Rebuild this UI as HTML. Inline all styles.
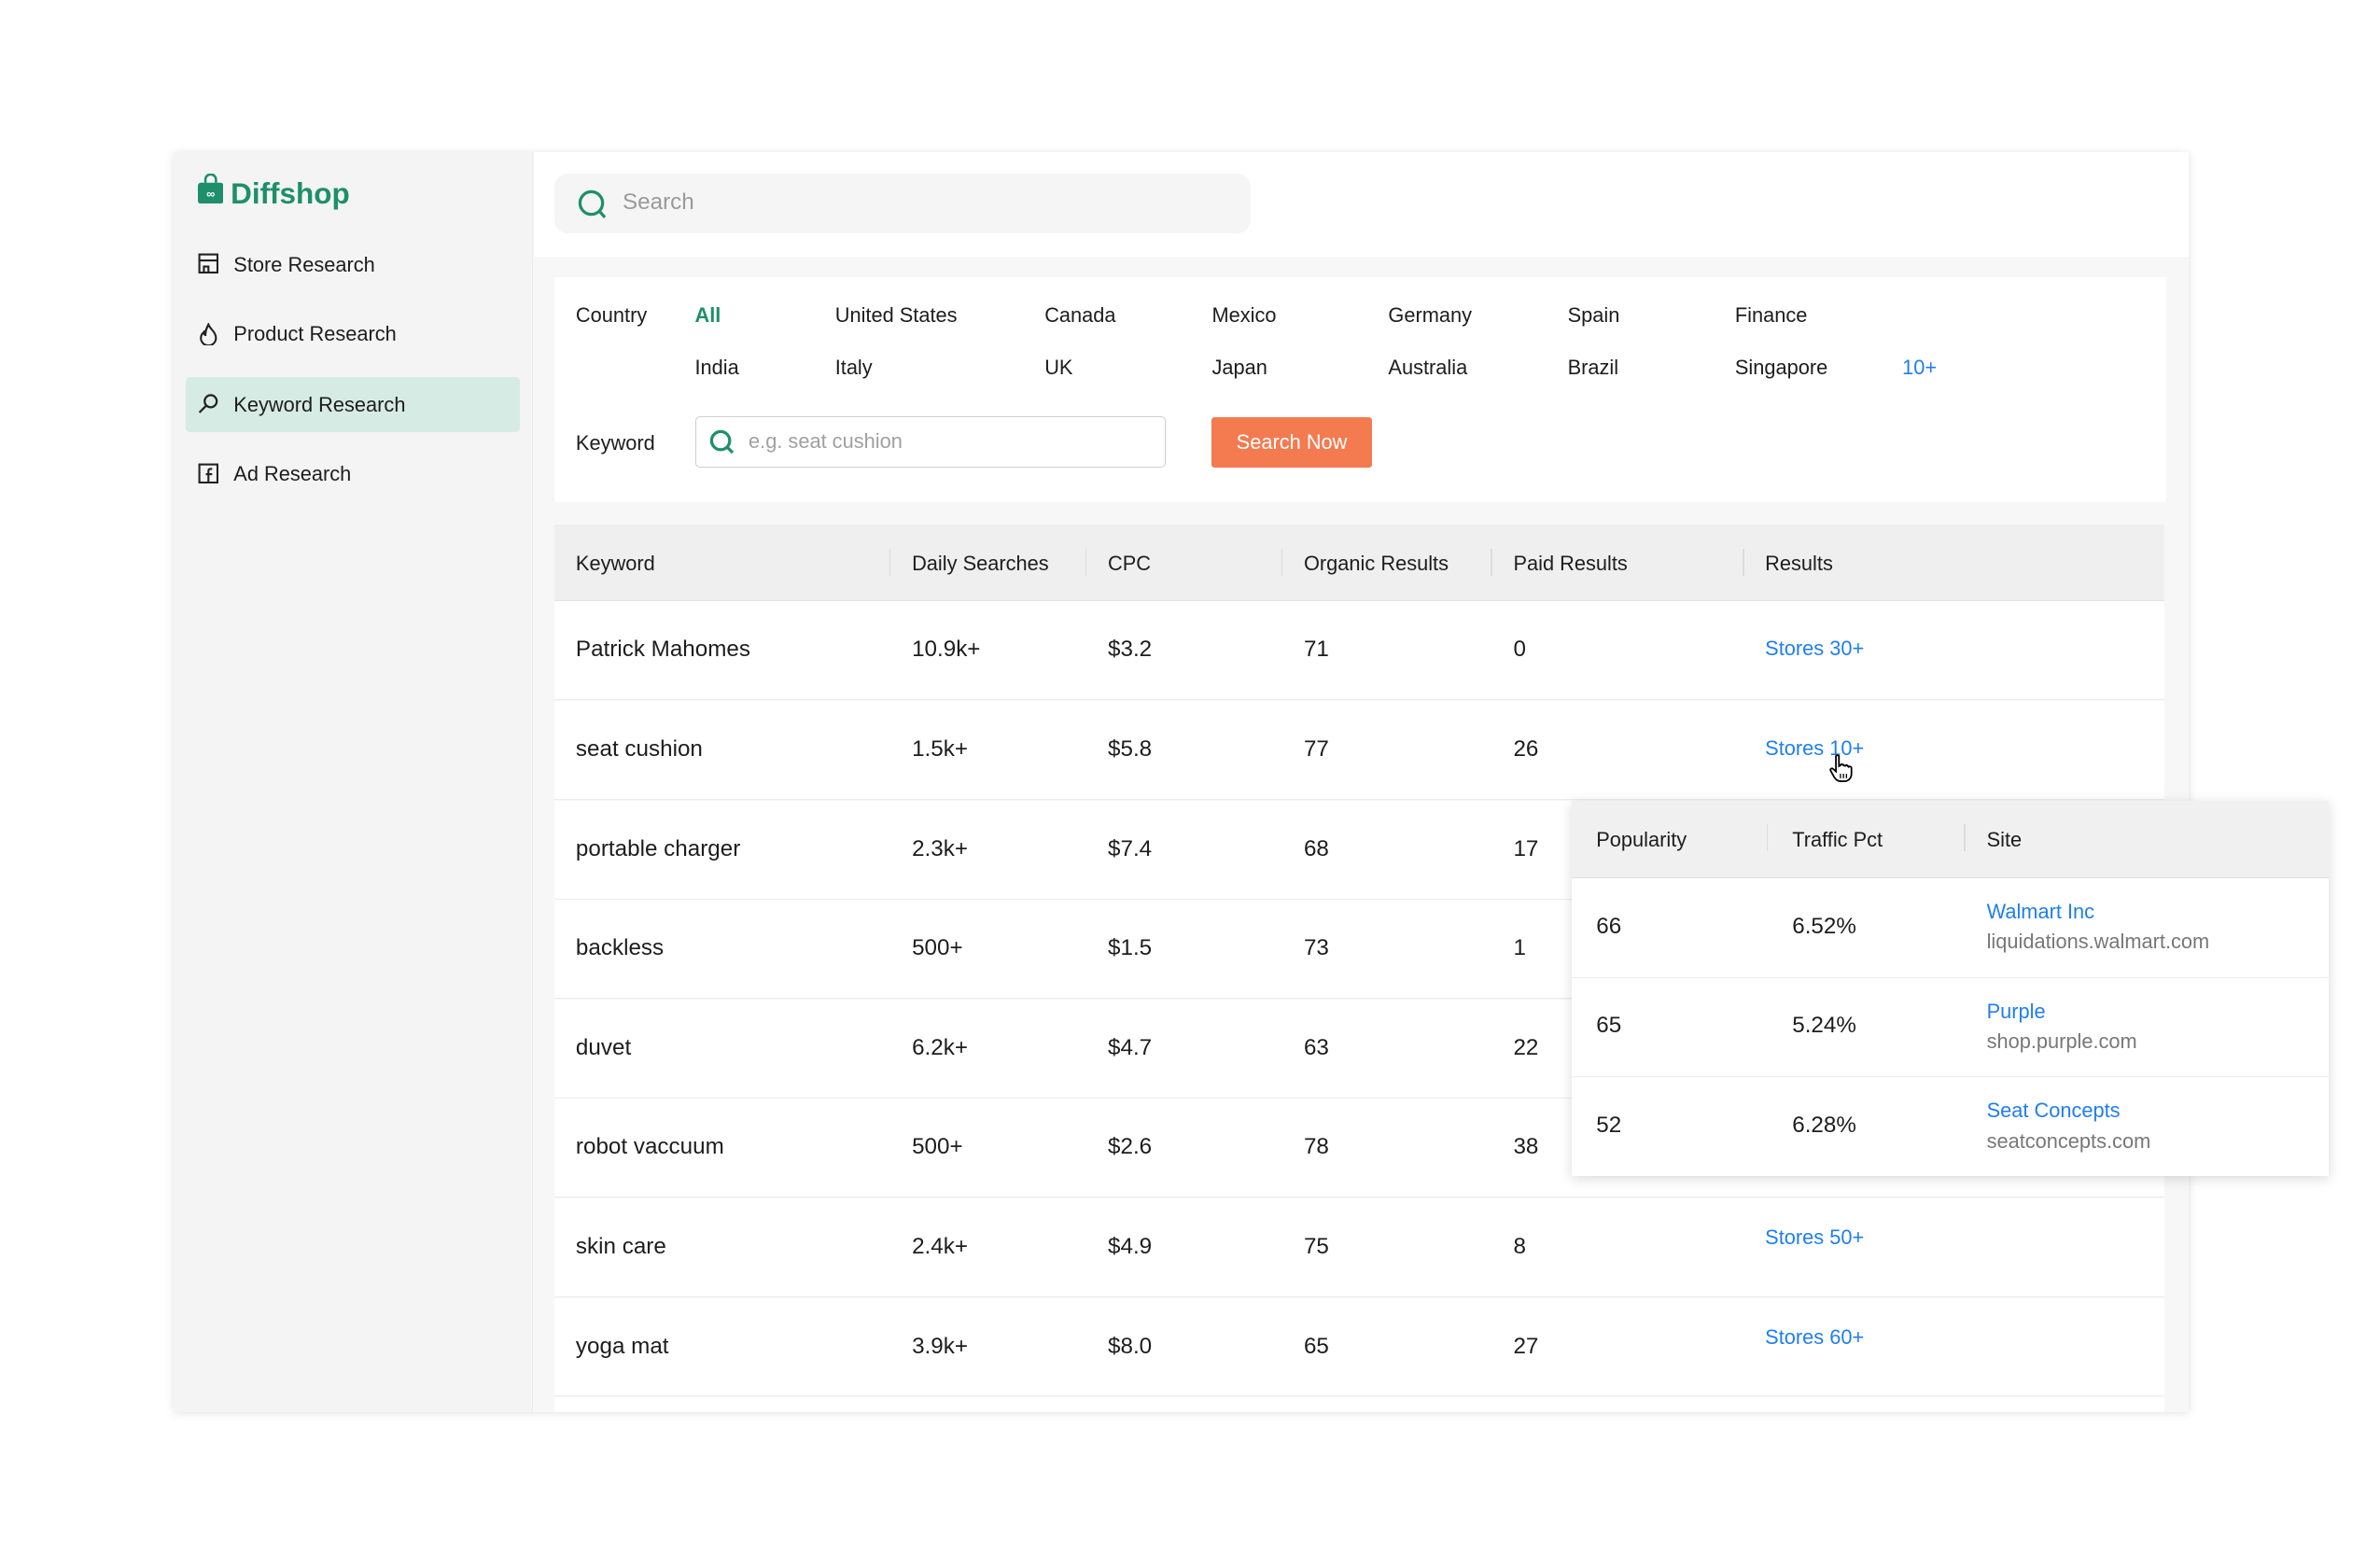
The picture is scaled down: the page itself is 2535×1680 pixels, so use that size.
<!DOCTYPE html>
<html><head><meta charset="utf-8"><style>
html,body{margin:0;padding:0;background:#fff;overflow:hidden;width:2535px;height:1680px}
#z{zoom:1.615;position:relative;width:1570px;height:1040px;font-family:"Liberation Sans",sans-serif;color:#1d1d1d}
.a{position:absolute;white-space:nowrap}
.card{position:absolute;left:115px;top:101px;width:1337px;height:836px;background:#f7f7f7;box-shadow:0 1px 6px rgba(0,0,0,.12);overflow:hidden}
.side{position:absolute;left:0;top:0;width:238px;height:836px;background:#f4f4f4;border-right:1px solid #ececec}
.nav{position:absolute;left:8px;width:222px;height:37px;font-size:13.5px;line-height:37px}
.nav span{position:absolute;left:32px}
.nav svg{position:absolute;left:8px;top:11px}
.hdr{position:absolute;left:239px;top:0;right:0;height:69px;background:#fff}
.t{font-size:13.5px}
.row{position:absolute;left:253px;width:1068px;height:65px;background:#fff;border-bottom:1px solid #ebebeb}
.row div{position:absolute;top:0;line-height:65px;font-size:15px}
.blue{color:#1f7ef0}
.sep{position:absolute;top:16px;width:1px;height:18px;background:#dcdcdc}
</style></head><body><div id="z">
<div class="card">
 <div class="side">
  <svg class="a" style="left:16px;top:14px" width="17" height="20" viewBox="0 0 17 20"><path d="M5 6V4a3.5 3.5 0 0 1 7 0v2" fill="none" stroke="#1e8f6a" stroke-width="1.6"/><rect x="0" y="6" width="17" height="14" rx="2" fill="#1e8f6a"/><text x="8.5" y="16" font-size="8" fill="#fff" text-anchor="middle" font-family="Liberation Sans" font-weight="bold">∞</text></svg>
  <div class="a" style="left:38px;top:16px;font-size:19.5px;font-weight:bold;color:#1e8f6a">Diffshop</div>
  <div class="nav" style="top:56px"><svg width="14" height="14" viewBox="0 0 14 14" fill="none" stroke="#222" stroke-width="1.3"><rect x="1" y="1" width="12" height="12"/><path d="M1 5h12M4 13V9h3v4"/></svg><span>Store Research</span></div>
  <div class="nav" style="top:102px"><svg width="14" height="15" viewBox="0 0 14 15" fill="none" stroke="#222" stroke-width="1.3"><path d="M7 1c1 3 5 5 5 9a5 5 0 0 1-10 0c0-2 1-3 2-4 0 2 1 2 1 2 0-3 1-5 2-7z"/></svg><span>Product Research</span></div>
  <div class="nav" style="top:149px;background:#d6ebe4;border-radius:3px"><svg width="14" height="14" viewBox="0 0 14 14" fill="none" stroke="#222" stroke-width="1.4"><circle cx="8.5" cy="5.5" r="4"/><path d="M5.5 8.5L1 13"/></svg><span>Keyword Research</span></div>
  <div class="nav" style="top:195px"><svg width="14" height="14" viewBox="0 0 14 14" fill="none" stroke="#222" stroke-width="1.3"><rect x="1" y="1" width="12" height="12"/><path d="M9.5 4H8.3C7.5 4 7 4.5 7 5.3V13M5.3 7.5H9.5" /></svg><span>Ad Research</span></div>
 </div>
 <div class="hdr">
  <div class="a" style="left:14px;top:14px;width:462px;height:40px;background:#f5f5f5;border-radius:9px">
   <svg class="a" style="left:15px;top:11px" width="20" height="20" viewBox="0 0 20 20" fill="none" stroke="#1e8f6a" stroke-width="2"><circle cx="9" cy="9" r="7.5"/><path d="M14.5 14.5L18 18.5"/></svg>
   <div class="a" style="left:45px;top:11px;font-size:15px;color:#9a9a9a">Search</div>
  </div>
 </div>
 <div class="a" style="left:253px;top:83px;width:1069px;height:149px;background:#fff"></div>
 <div class="a t" style="left:267px;top:100px">Country</div>
 <div class="a t" style="left:346px;top:100px;color:#1e8f6a;font-weight:bold">All</div>
 <div class="a t" style="left:439px;top:100px">United States</div>
 <div class="a t" style="left:578px;top:100px">Canada</div>
 <div class="a t" style="left:689px;top:100px">Mexico</div>
 <div class="a t" style="left:806px;top:100px">Germany</div>
 <div class="a t" style="left:925px;top:100px">Spain</div>
 <div class="a t" style="left:1036px;top:100px">Finance</div>
 <div class="a t" style="left:346px;top:135px">India</div>
 <div class="a t" style="left:439px;top:135px">Italy</div>
 <div class="a t" style="left:578px;top:135px">UK</div>
 <div class="a t" style="left:689px;top:135px">Japan</div>
 <div class="a t" style="left:806px;top:135px">Australia</div>
 <div class="a t" style="left:925px;top:135px">Brazil</div>
 <div class="a t" style="left:1036px;top:135px">Singapore</div>
 <div class="a t blue" style="left:1147px;top:135px">10+</div>
 <div class="a t" style="left:267px;top:185px">Keyword</div>
 <div class="a" style="left:346px;top:175px;width:311px;height:33px;border:1px solid #cfcfcf;border-radius:3px;background:#fff">
  <svg class="a" style="left:9px;top:8px" width="17" height="17" viewBox="0 0 17 17" fill="none" stroke="#1e8f6a" stroke-width="2"><circle cx="7.5" cy="7.5" r="6"/><path d="M12 12l3.5 3.5"/></svg>
  <div class="a" style="left:35px;top:8px;font-size:13.5px;color:#a0a0a0">e.g. seat cushion</div>
 </div>
 <div class="a" style="left:689px;top:176px;width:106px;height:33px;background:#f47a50;border-radius:2px;color:#fff;font-size:13.5px;line-height:33px;text-align:center">Search Now</div>
 <div class="a" style="left:253px;top:247px;width:1068px;height:50px;background:#efefef;border-bottom:1px solid #e2e2e2">
  <div class="a t" style="left:14px;top:18px">Keyword</div><div class="sep" style="left:222px"></div>
  <div class="a t" style="left:237px;top:18px">Daily Searches</div><div class="sep" style="left:352px"></div>
  <div class="a t" style="left:367px;top:18px">CPC</div><div class="sep" style="left:482px"></div>
  <div class="a t" style="left:497px;top:18px">Organic Results</div><div class="sep" style="left:621px"></div>
  <div class="a t" style="left:636px;top:18px">Paid Results</div><div class="sep" style="left:788px"></div>
  <div class="a t" style="left:803px;top:18px">Results</div>
 </div>
 <div class="row" style="top:298px"><div style="left:14px">Patrick Mahomes</div><div style="left:237px">10.9k+</div><div style="left:367px">$3.2</div><div style="left:497px">71</div><div style="left:636px">0</div><div class="blue" style="left:803px;font-size:13.5px;line-height:63px">Stores 30+</div></div>
 <div class="row" style="top:364px"><div style="left:14px">seat cushion</div><div style="left:237px">1.5k+</div><div style="left:367px">$5.8</div><div style="left:497px">77</div><div style="left:636px">26</div><div class="blue" style="left:803px;font-size:13.5px;line-height:63px">Stores 10+</div></div>
 <div class="row" style="top:430px"><div style="left:14px">portable charger</div><div style="left:237px">2.3k+</div><div style="left:367px">$7.4</div><div style="left:497px">68</div><div style="left:636px">17</div></div>
 <div class="row" style="top:496px"><div style="left:14px">backless</div><div style="left:237px">500+</div><div style="left:367px">$1.5</div><div style="left:497px">73</div><div style="left:636px">1</div></div>
 <div class="row" style="top:562px"><div style="left:14px">duvet</div><div style="left:237px">6.2k+</div><div style="left:367px">$4.7</div><div style="left:497px">63</div><div style="left:636px">22</div></div>
 <div class="row" style="top:628px"><div style="left:14px">robot vaccuum</div><div style="left:237px">500+</div><div style="left:367px">$2.6</div><div style="left:497px">78</div><div style="left:636px">38</div></div>
 <div class="row" style="top:694px"><div style="left:14px">skin care</div><div style="left:237px">2.4k+</div><div style="left:367px">$4.9</div><div style="left:497px">75</div><div style="left:636px">8</div><div class="blue" style="left:803px;font-size:13.5px;line-height:52px">Stores 50+</div></div>
 <div class="row" style="top:760px"><div style="left:14px">yoga mat</div><div style="left:237px">3.9k+</div><div style="left:367px">$8.0</div><div style="left:497px">65</div><div style="left:636px">27</div><div class="blue" style="left:803px;font-size:13.5px;line-height:52px">Stores 60+</div></div>
 <div class="row" style="top:826px"></div>
</div>
<svg class="a" style="left:1213px;top:500px" width="16" height="19" viewBox="0 0 16 19"><path d="M5 1.5c0-1 2-1 2 0V8l1-.5c0-1 2-1 2 0l1 .3c0-.8 2-.6 2 .3l.5.4c.5-.6 1.8-.3 1.8.6V13c0 3-2 5-5 5H8c-2 0-3-1-4-2.5L1.5 11c-.6-1 .6-2 1.6-1.2L5 11.5z" fill="#fff" stroke="#000" stroke-width="1.1"/><path d="M8 13v3M10 13v3M12 13v3" stroke="#000" stroke-width=".8"/></svg>
<div class="a" style="left:1043px;top:531px;width:502px;height:249px;background:#fff;box-shadow:0 2px 8px rgba(0,0,0,.15)">
 <div class="a" style="left:0;top:0;width:502px;height:51px;background:#f0f0f0;border-bottom:1px solid #e0e0e0">
  <div class="a t" style="left:16px;top:18px">Popularity</div><div class="sep" style="left:129px"></div>
  <div class="a t" style="left:146px;top:18px">Traffic Pct</div><div class="sep" style="left:260px"></div>
  <div class="a t" style="left:275px;top:18px">Site</div>
 </div>
 <div class="a" style="left:0;top:52px;width:502px;height:65px;border-bottom:1px solid #ececec">
  <div class="a" style="left:16px;top:23px;font-size:15px">66</div><div class="a" style="left:146px;top:23px;font-size:15px">6.52%</div>
  <div class="a blue t" style="left:275px;top:14px">Walmart Inc</div><div class="a t" style="left:275px;top:34px;color:#777">liquidations.walmart.com</div>
 </div>
 <div class="a" style="left:0;top:118px;width:502px;height:65px;border-bottom:1px solid #ececec">
  <div class="a" style="left:16px;top:23px;font-size:15px">65</div><div class="a" style="left:146px;top:23px;font-size:15px">5.24%</div>
  <div class="a blue t" style="left:275px;top:14px">Purple</div><div class="a t" style="left:275px;top:34px;color:#777">shop.purple.com</div>
 </div>
 <div class="a" style="left:0;top:184px;width:502px;height:65px">
  <div class="a" style="left:16px;top:23px;font-size:15px">52</div><div class="a" style="left:146px;top:23px;font-size:15px">6.28%</div>
  <div class="a blue t" style="left:275px;top:14px">Seat Concepts</div><div class="a t" style="left:275px;top:34px;color:#777">seatconcepts.com</div>
 </div>
</div>
</div></body></html>
